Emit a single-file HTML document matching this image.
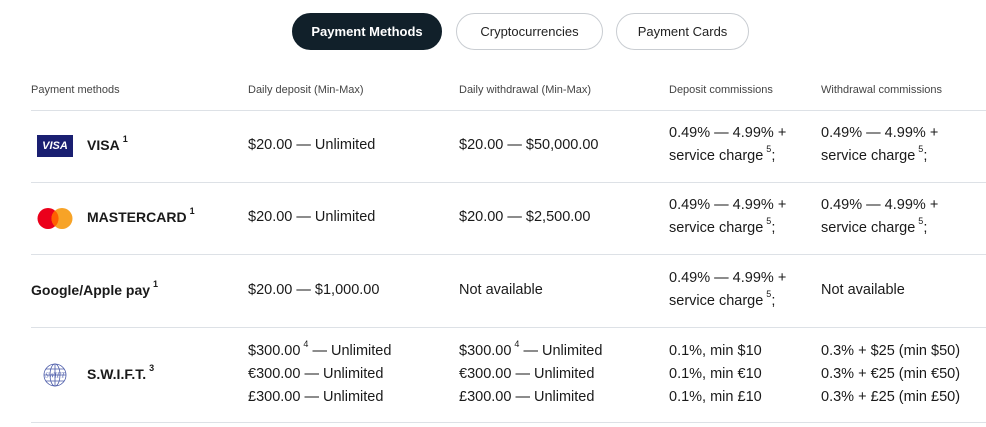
<!DOCTYPE html>
<html><head><meta charset="utf-8"><style>
*{margin:0;padding:0;box-sizing:border-box}
body{width:986px;height:427px;background:#fff;font-family:"Liberation Sans",sans-serif;color:#111;position:relative;overflow:hidden}
.t{position:absolute;top:13px;height:37px;border-radius:19px;border:1px solid #c9cdd2;font-size:13px;display:flex;align-items:center;justify-content:center;color:#222}
.a{background:#11202a;color:#fff;border-color:#11202a;font-weight:bold}
.h{position:absolute;top:84px;font-size:11px;color:#444}
.l{position:absolute;left:31px;right:0;height:1px;background:#dde1e6}
.c{position:absolute;font-size:14.5px;line-height:23px;color:#1a1a1a;white-space:nowrap}
sup{font-size:9px;line-height:0;position:relative;top:-2px;margin-left:3px}
.n{font-weight:bold;font-size:14px}
</style></head><body>
<div class="t a" style="left:292px;width:150px">Payment Methods</div>
<div class="t" style="left:456px;width:147px">Cryptocurrencies</div>
<div class="t" style="left:616px;width:133px">Payment Cards</div>
<div class="h" style="left:31px">Payment methods</div>
<div class="h" style="left:248px">Daily deposit (Min-Max)</div>
<div class="h" style="left:459px">Daily withdrawal (Min-Max)</div>
<div class="h" style="left:669px">Deposit commissions</div>
<div class="h" style="left:821px">Withdrawal commissions</div>
<div class="l" style="top:110px"></div>
<div class="l" style="top:182px"></div>
<div class="l" style="top:254px"></div>
<div class="l" style="top:327px"></div>
<div class="l" style="top:422px"></div>

<div style="position:absolute;left:37px;top:135px;width:36px;height:22px;background:#1a1f71;color:#fff;font-weight:bold;font-style:italic;font-size:11px;display:flex;align-items:center;justify-content:center">VISA</div>
<div class="c n" style="left:87px;top:134px">VISA<sup>1</sup></div>
<div class="c" style="left:248px;top:134px">$20.00 — Unlimited</div>
<div class="c" style="left:459px;top:134px">$20.00 — $50,000.00</div>
<div class="c" style="left:669px;top:122px">0.49% — 4.99% +<br>service charge<sup>5</sup>;</div>
<div class="c" style="left:821px;top:122px">0.49% — 4.99% +<br>service charge<sup>5</sup>;</div>

<svg style="position:absolute;left:37px;top:207px" width="36" height="23"><circle cx="11" cy="11.5" r="10.5" fill="#eb001b"/><circle cx="25" cy="11.5" r="10.5" fill="#f79e1b" opacity=".95"/><path d="M18 3.6a10.5 10.5 0 0 1 0 15.8a10.5 10.5 0 0 1 0-15.8z" fill="#ff5f00"/></svg>
<div class="c n" style="left:87px;top:206px">MASTERCARD<sup>1</sup></div>
<div class="c" style="left:248px;top:206px">$20.00 — Unlimited</div>
<div class="c" style="left:459px;top:206px">$20.00 — $2,500.00</div>
<div class="c" style="left:669px;top:194px">0.49% — 4.99% +<br>service charge<sup>5</sup>;</div>
<div class="c" style="left:821px;top:194px">0.49% — 4.99% +<br>service charge<sup>5</sup>;</div>

<div class="c n" style="left:31px;top:279px">Google/Apple pay<sup>1</sup></div>
<div class="c" style="left:248px;top:279px">$20.00 — $1,000.00</div>
<div class="c" style="left:459px;top:279px">Not available</div>
<div class="c" style="left:669px;top:267px">0.49% — 4.99% +<br>service charge<sup>5</sup>;</div>
<div class="c" style="left:821px;top:279px">Not available</div>

<svg style="position:absolute;left:43px;top:363px" width="24" height="24" fill="none" stroke="#4a5aa8" stroke-width="0.8"><circle cx="12" cy="12" r="11"/><ellipse cx="12" cy="12" rx="5" ry="11"/><path d="M1 12h22M3 6h18M3 18h18M12 1v22"/><text x="12" y="14.5" font-size="7" fill="#4a5aa8" stroke="none" text-anchor="middle" font-family="Liberation Serif" font-style="italic">SWIFT</text></svg>
<div class="c n" style="left:87px;top:363px">S.W.I.F.T.<sup>3</sup></div>
<div class="c" style="left:248px;top:340px">$300.00<sup>4</sup> — Unlimited<br>€300.00 — Unlimited<br>£300.00 — Unlimited</div>
<div class="c" style="left:459px;top:340px">$300.00<sup>4</sup> — Unlimited<br>€300.00 — Unlimited<br>£300.00 — Unlimited</div>
<div class="c" style="left:669px;top:340px">0.1%, min $10<br>0.1%, min €10<br>0.1%, min £10</div>
<div class="c" style="left:821px;top:340px">0.3% + $25 (min $50)<br>0.3% + €25 (min €50)<br>0.3% + £25 (min £50)</div>
</body></html>
